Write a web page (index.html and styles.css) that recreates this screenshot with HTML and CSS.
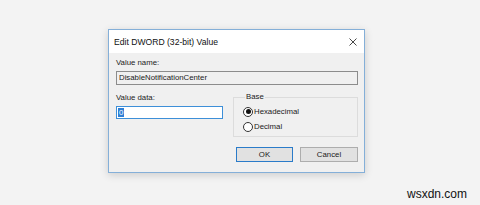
FILE: index.html
```html
<!DOCTYPE html>
<html lang="en">
<head>
  <meta charset="UTF-8">
  <title>Edit DWORD (32-bit) Value</title>
  <link rel="stylesheet" href="styles.css">
</head>
<body>

  <div class="page">
    <!-- registry dialog -->
    <div class="dialog">
      <div class="titlebar">
        <span class="title">Edit DWORD (32-bit) Value</span>
        <svg class="close" width="8" height="8" viewBox="0 0 8 8">
          <path d="M0.5 0.5 L7.5 7.5 M7.5 0.5 L0.5 7.5" stroke="#333" stroke-width="0.9" fill="none"/>
        </svg>
      </div>

      <div class="dialog-body">
        <div class="label">Value name:</div>
        <div class="name-field">DisableNotificationCenter</div>

        <div class="row">
          <div class="data-col">
            <div class="label">Value data:</div>
            <div class="data-field"><span class="sel">0</span></div>
          </div>
          <fieldset class="base">
            <legend>Base</legend>
            <div class="radio-row"><span class="radio checked"></span>Hexadecimal</div>
            <div class="radio-row"><span class="radio"></span>Decimal</div>
          </fieldset>
        </div>

        <div class="buttons">
          <div class="btn default">OK</div>
          <div class="btn">Cancel</div>
        </div>
      </div>
    </div>

    <div class="mark">wsxdn.com</div>
  </div>

</body>
</html>
```

FILE: styles.css
```css
/* reset */
* { margin:0; padding:0; box-sizing:border-box; }
body { background:#f3f3f3; font-family:"Liberation Sans", Arial, sans-serif; color:#1a1a1a; }

.page {
  width: 480px;
  height: 205px;
  padding: 29px 0 0 108px;
  overflow: hidden;
}

/* dialog window */
.dialog {
  width: 257px;
  height: 144px;
  background: #f0f0f0;
  border: 1px solid #84afd8;
  box-shadow: 0 2px 8px rgba(0,0,0,0.16);
}
.titlebar {
  height: 23px;
  background: #fff;
  display: flex;
  align-items: center;
  justify-content: space-between;
  padding: 1px 7px 0 5px;
}
.title { font-size: 8.6px; color: #111; }
.close { display: block; margin-top: -1px; }

.dialog-body {
  padding: 5px 6px 0 7px;
  font-size: 7.8px;
}
.label { line-height: 10px; color: #222; }

.name-field {
  margin-top: 3px;
  height: 14px;
  width: 242px;
  border: 1px solid #8c8c8c;
  background: #f0f0f0;
  padding-left: 2px;
  line-height: 12px;
  white-space: nowrap;
}

.row {
  display: flex;
  margin-top: 8px;
}
.data-col { width: 107px; }
.data-field {
  margin-top: 3px;
  height: 13px;
  border: 1px solid #3d8fd8;
  background: #fff;
  padding: 1px 0 0 1px;
  line-height: 9px;
}
.sel {
  display: inline-block;
  background: #2f7fd6;
  color: #fff;
  padding: 0 1px;
  line-height: 9px;
}

/* group box */
.base {
  margin-left: 10px;
  width: 125px;
  height: 44px;
  border: 1px solid #dcdcdc;
  padding: 3px 0 2px 9px;
}
.base legend {
  font-size: 7.8px;
  line-height: 8px;
  padding: 0 1px;
  margin-left: 2px;
}
.radio-row {
  display: flex;
  align-items: center;
  height: 15px;
}
.radio {
  width: 10px;
  height: 10px;
  border: 1px solid #333;
  border-radius: 50%;
  background: #fff;
  margin-right: 1px;
  display: flex;
  align-items: center;
  justify-content: center;
}
.radio.checked::after {
  content: '';
  width: 5px;
  height: 5px;
  border-radius: 50%;
  background: #111;
}

/* buttons */
.buttons {
  display: flex;
  justify-content: flex-end;
  gap: 7px;
  margin-top: 10px;
}
.btn {
  width: 58px;
  height: 15px;
  border: 1px solid #adadad;
  background: #e1e1e1;
  text-align: center;
  line-height: 13px;
}
.btn.default {
  width: 57px;
  border-color: #2a7bc9;
}

/* watermark */
.mark {
  margin: 14px 0 0 299px;
  font-size: 12px;
  line-height: 14px;
  color: #111;
}
```
